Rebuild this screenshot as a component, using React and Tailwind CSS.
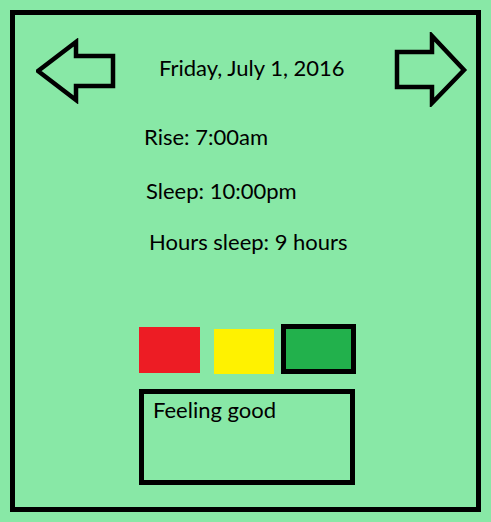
import React from "react";

const LeftArrow = () => (
  <svg width="80" height="66" viewBox="36 38 80 66" className="block shrink-0">
    <polygon
      points="38,71 76,42 76,56 113,56 113,86 76,86 76,100"
      fill="none"
      stroke="#000"
      strokeWidth="4.5"
      strokeLinejoin="miter"
      strokeMiterlimit="10"
    />
  </svg>
);

const RightArrow = () => (
  <svg width="75" height="75" viewBox="391 32 75 75" className="block shrink-0">
    <polygon
      points="395,52 430,52 430,36 462,70 430,103 430,87 395,87"
      fill="none"
      stroke="#000"
      strokeWidth="4.5"
      strokeLinejoin="miter"
      strokeMiterlimit="10"
    />
  </svg>
);

export default function App() {
  return (
    <div
      className="w-[491px] h-[522px] bg-[#88e8a6] p-[10px] text-black text-[22px] leading-[26px]"
      style={{ fontFamily: "Lato, 'Open Sans', sans-serif" }}
    >
      <div className="h-full border-[5px] border-black flex flex-col">
        {/* header */}
        <div className="flex items-start mt-[23px]">
          <div className="ml-[21px]">
            <LeftArrow />
          </div>
          <div className="ml-[43px] mt-[17px] whitespace-nowrap">Friday, July 1, 2016</div>
          <div className="ml-auto mr-[8px] -mt-[6px]">
            <RightArrow />
          </div>
        </div>

        {/* stats */}
        <div className="ml-[129px] mt-[17px]">Rise: 7:00am</div>
        <div className="ml-[131px] mt-[28px]">Sleep: 10:00pm</div>
        <div className="ml-[134px] mt-[25px]">Hours sleep: 9 hours</div>

        {/* mood colours */}
        <div className="flex items-end ml-[124px] mt-[69px] h-[50px]">
          <div className="w-[61px] h-[46px] mb-[1px] bg-[#ed1c24]" />
          <div className="w-[60px] h-[45px] ml-[14px] bg-[#fff200]" />
          <div className="w-[75px] h-[50px] ml-[7px] border-[5px] border-black bg-[#22b14c]" />
        </div>

        {/* note */}
        <div className="ml-[124px] mt-[15px] w-[216px] h-[96px] border-[5px] border-black pl-[9px] pt-[3px]">
          Feeling good
        </div>
      </div>
    </div>
  );
}
